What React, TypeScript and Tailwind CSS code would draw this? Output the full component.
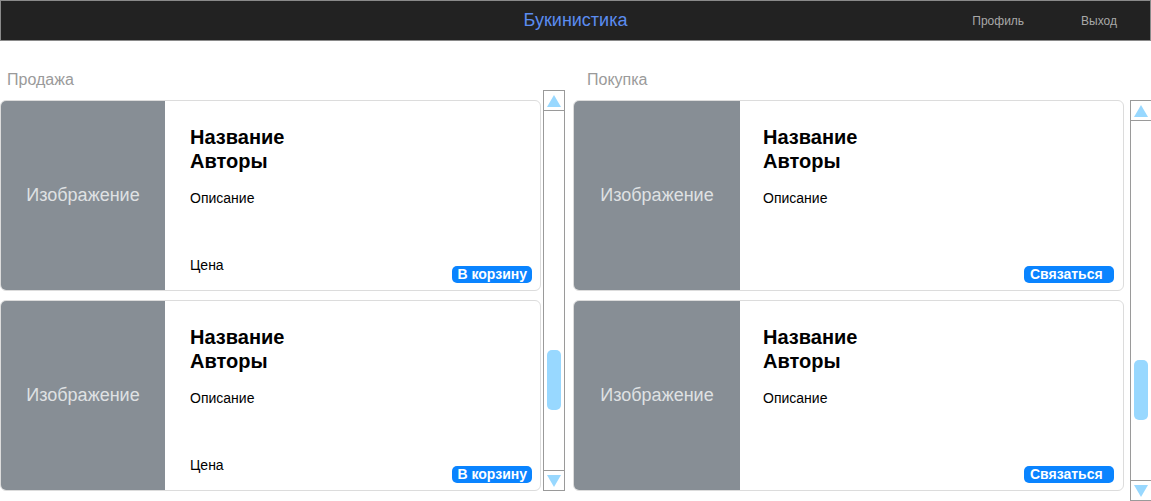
import React from 'react';

type Kind = 'sale' | 'buy';

function BookCard({ kind }: { kind: Kind }) {
  return (
    <div className="flex h-[191px] overflow-hidden rounded-[6px] border border-[#dcdcdc] bg-white">
      <div
        className={`flex shrink-0 items-center justify-center bg-[#878e95] text-[18px] text-[#dfe1e3] ${
          kind === 'sale' ? 'w-[164px]' : 'w-[166px]'
        }`}
      >
        Изображение
      </div>
      <div className={`relative flex-1 pt-[24px] ${kind === 'sale' ? 'pl-[25px]' : 'pl-[23px]'}`}>
        <div className="text-[20px] font-bold leading-[24px] text-black">
          Название
          <br />
          Авторы
        </div>
        <div className="mt-[17px] text-[14px] leading-[16px] text-black">Описание</div>
        {kind === 'sale' && (
          <div className="mt-[51px] text-[14px] leading-[16px] text-black">Цена</div>
        )}
        {kind === 'sale' ? (
          <button className="absolute bottom-[7px] right-[8px] h-[17px] rounded-[5px] bg-[#0a84ff] px-[5px] text-[14px] font-bold leading-[17px] text-white">
            В корзину
          </button>
        ) : (
          <button className="absolute bottom-[7px] right-[9px] h-[17px] w-[90px] rounded-[5px] bg-[#0a84ff] pl-[6px] text-left text-[14px] font-bold leading-[17px] text-white">
            Связаться
          </button>
        )}
      </div>
    </div>
  );
}

function Scrollbar({ thumbTop }: { thumbTop: number }) {
  return (
    <div className="relative flex h-[401px] w-[22px] shrink-0 flex-col border border-[#9a9a9a] bg-white">
      <div className="flex h-[20px] items-center justify-center border-b border-[#9a9a9a]">
        <svg width="14" height="12" viewBox="0 0 14 12">
          <polygon points="7,0 14,12 0,12" fill="#98d8ff" />
        </svg>
      </div>
      <div className="flex-1" />
      <div className="flex h-[20px] items-center justify-center border-t border-[#9a9a9a]">
        <svg width="14" height="12" viewBox="0 0 14 12">
          <polygon points="0,0 14,0 7,12" fill="#98d8ff" />
        </svg>
      </div>
      <div
        className="absolute left-[3px] h-[60px] w-[14px] rounded-[5px] bg-[#98d8ff]"
        style={{ top: thumbTop }}
      />
    </div>
  );
}

export default function App() {
  return (
    <div className="h-[501px] w-[1151px] overflow-hidden bg-white font-['Liberation_Sans',Arial,sans-serif]">
      <header className="relative flex h-[41px] items-center justify-center border border-[#8a8a8a] bg-[#222222]">
        <span className="text-[18px] text-[#5b8cf0]">Букинистика</span>
        <nav className="absolute right-[33px] top-0 flex h-full items-center gap-[57px] text-[12px] text-[#a8a8a8]">
          <span>Профиль</span>
          <span>Выход</span>
        </nav>
      </header>

      <div className="flex">
        <section className="w-[573px] shrink-0">
          <h2 className="ml-[7px] mt-[30px] text-[16px] leading-[18px] text-[#9a9a9a]">Продажа</h2>
          <div className="mt-[1px] flex items-start gap-[2px]">
            <div className="mt-[10px] flex w-[541px] flex-col gap-[9px]">
              <BookCard kind="sale" />
              <BookCard kind="sale" />
            </div>
            <Scrollbar thumbTop={259} />
          </div>
        </section>

        <section className="flex-1">
          <h2 className="ml-[14px] mt-[30px] text-[16px] leading-[18px] text-[#9a9a9a]">Покупка</h2>
          <div className="mt-[11px] flex items-start gap-[6px] pr-[1px]">
            <div className="flex w-[551px] flex-col gap-[9px]">
              <BookCard kind="buy" />
              <BookCard kind="buy" />
            </div>
            <Scrollbar thumbTop={259} />
          </div>
        </section>
      </div>
    </div>
  );
}
